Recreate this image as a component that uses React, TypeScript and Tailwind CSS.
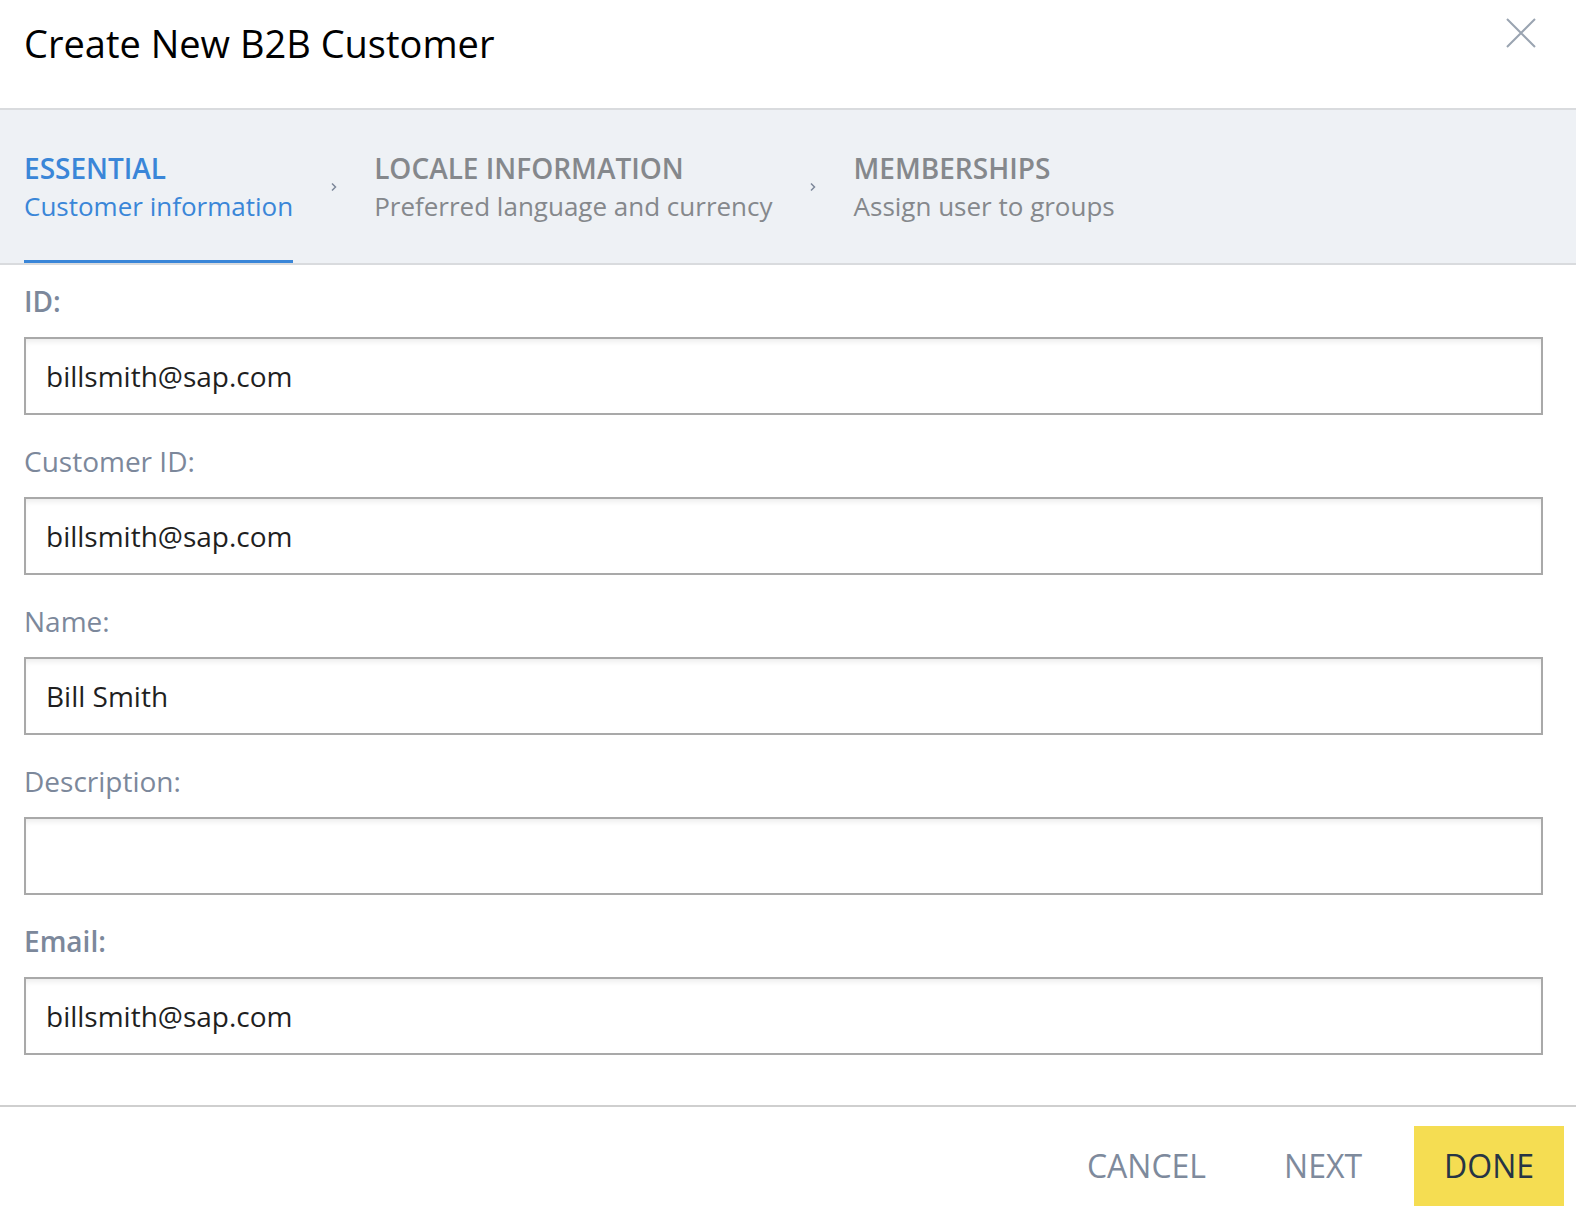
import { Fragment } from "react";

const steps = [
  { title: "ESSENTIAL", sub: "Customer information", active: true },
  { title: "LOCALE INFORMATION", sub: "Preferred language and currency", active: false },
  { title: "MEMBERSHIPS", sub: "Assign user to groups", active: false },
];

const fields = [
  { label: "ID:", value: "billsmith@sap.com", strong: true },
  { label: "Customer ID:", value: "billsmith@sap.com", strong: false },
  { label: "Name:", value: "Bill Smith", strong: false },
  { label: "Description:", value: "", strong: false },
  { label: "Email:", value: "billsmith@sap.com", strong: true },
];

const Chevron = () => (
  <div className="w-[81px] h-[76px] self-start flex items-center justify-center">
    <svg width="6" height="10" viewBox="0 0 6 10" fill="none">
      <path d="M1 1.5L4.5 5L1 8.5" stroke="#7d889a" strokeWidth="1.5" />
    </svg>
  </div>
);

export default function App() {
  return (
    <div
      className="w-[1576px] h-[1218px] bg-white flex flex-col overflow-hidden"
      style={{ fontFamily: '"Open Sans", "Noto Sans", sans-serif' }}
    >
      {/* header */}
      <div className="h-[110px] shrink-0 border-b-2 border-[#d9dbde] flex items-start justify-between pl-6 pr-10">
        <h1 className="mt-[17px] text-[38px] leading-[52px] text-black">Create New B2B Customer</h1>
        <button className="mt-[18px]" aria-label="Close">
          <svg width="30" height="30" viewBox="0 0 30 30" fill="none">
            <path d="M1 1L29 29M29 1L1 29" stroke="#9aa4b1" strokeWidth="2" />
          </svg>
        </button>
      </div>

      {/* wizard steps */}
      <div className="shrink-0 bg-[#eef1f5] border-b-2 border-[#d9dbde] flex items-start px-6 pt-[39px]">
        {steps.map((s, i) => (
          <Fragment key={s.title}>
            {i > 0 && <Chevron />}
            <div
              className={`flex flex-col pb-[35px] border-b-[3px] ${
                s.active ? "border-[#3a86d8]" : "border-transparent"
              }`}
            >
              <span
                className={`text-[28px] leading-[38px] font-semibold ${
                  s.active ? "text-[#3a86d8]" : "text-[#85888c]"
                }`}
              >
                {s.title}
              </span>
              <span
                className={`text-[26px] leading-[38px] ${
                  s.active ? "text-[#3a86d8]" : "text-[#85888c]"
                }`}
              >
                {s.sub}
              </span>
            </div>
          </Fragment>
        ))}
      </div>

      {/* form */}
      <div className="flex flex-col gap-[28px] pt-[18px] pl-6 pr-[33px]">
        {fields.map((f) => (
          <div key={f.label} className="flex flex-col">
            <label
              className={`h-[36px] mb-[18px] text-[28px] leading-[36px] text-[#7c889b] ${
                f.strong ? "font-semibold" : ""
              }`}
            >
              {f.label}
            </label>
            <div className="h-[78px] border-2 border-[#a9a9a9] bg-white shadow-[inset_0_5px_6px_-3px_rgba(0,0,0,0.09)] flex items-center px-5">
              <span className="text-[28px] text-[#1f1f1f]">{f.value}</span>
            </div>
          </div>
        ))}
      </div>

      {/* footer */}
      <div className="mt-[50px] border-t-2 border-[#cfcfcf] flex justify-end items-center gap-[22px] pt-[19px] pr-3">
        <button className="h-[80px] pl-[30px] pr-[26px] text-[32px] text-[#7e8a9c]">CANCEL</button>
        <button className="h-[80px] px-[30px] text-[32px] text-[#7e8a9c]">NEXT</button>
        <button className="h-[80px] px-[30px] text-[32px] text-[#263445] bg-[#f5dd52]">DONE</button>
      </div>
    </div>
  );
}
